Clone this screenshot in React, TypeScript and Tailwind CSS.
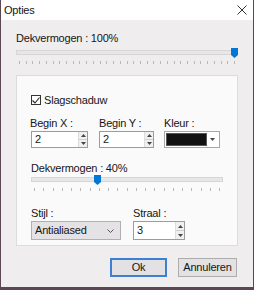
import React from 'react';

function Ticks({ count }: { count: number }) {
  return (
    <div className="flex justify-between px-[3px] h-[3px] mt-[3px]">
      {Array.from({ length: count }).map((_, i) => (
        <div key={i} className="w-px h-[3px] bg-[#b8b8b8]" />
      ))}
    </div>
  );
}

function Slider({ pct, ticks }: { pct: number; ticks: number }) {
  return (
    <div>
      <div className="relative h-[10px]">
        <div className="absolute left-0 right-0 top-[2px] h-[5px] bg-[#e7e7e7] border border-[#d6d6d6]" />
        <svg
          className="absolute top-0"
          style={{ left: `calc(${pct}% - ${pct / 100 * 7}px)` }}
          width="7"
          height="10"
          viewBox="0 0 7 10"
        >
          <path d="M0 0 H7 V7 L3.5 10 L0 7 Z" fill="#0078d7" />
        </svg>
      </div>
      <Ticks count={ticks} />
    </div>
  );
}

function Spinner() {
  return (
    <div className="flex flex-col w-[9px] h-full border-l border-[#dcdcdc]">
      <div className="flex-1 flex items-center justify-center bg-[#f0f0f0] border-b border-[#cfcfcf]">
        <svg width="5" height="3" viewBox="0 0 5 3"><path d="M0 3 L2.5 0 L5 3 Z" fill="#444" /></svg>
      </div>
      <div className="flex-1 flex items-center justify-center bg-[#f0f0f0]">
        <svg width="5" height="3" viewBox="0 0 5 3"><path d="M0 0 L2.5 3 L5 0 Z" fill="#444" /></svg>
      </div>
    </div>
  );
}

function NumField({ value, width }: { value: string; width: string }) {
  return (
    <div className={`${width} flex bg-white border border-[#9c9c9c]`}>
      <div className="flex-1 pl-[3px] flex items-center">{value}</div>
      <Spinner />
    </div>
  );
}

export default function App() {
  return (
    <div
      className="w-[254px] h-[290px] bg-[#5a4753] flex text-[11px] tracking-[-0.2px] text-[#151515]"
      style={{ fontFamily: '"Liberation Sans", Arial, sans-serif' }}
    >
      <div className="ml-[1px] mr-[4px] mb-[3px] flex-1 flex flex-col bg-[#f0edef]">
        <div className="h-[20px] bg-white flex items-center justify-between pl-[3px] pr-[6px]">
          <span className="leading-none">Opties</span>
          <svg width="10" height="10" viewBox="0 0 10 10">
            <path d="M0.5 0.5 L9.5 9.5 M9.5 0.5 L0.5 9.5" stroke="#333" strokeWidth="1" />
          </svg>
        </div>
        <div className="px-[15px] pt-[10px] flex flex-col">
          <div className="leading-[16px]">Dekvermogen : 100%</div>
          <div className="mt-[2px]">
            <Slider pct={100} ticks={33} />
          </div>
          <div className="mt-[11px] h-[171px] bg-[#fbfafb] border border-[#dcdcdc] px-[14px] pt-[18px] flex flex-col">
            <label className="flex items-center gap-[3px] leading-[12px]">
              <span className="w-[10px] h-[10px] border border-[#333] bg-white flex items-center justify-center">
                <svg width="8" height="7" viewBox="0 0 8 7">
                  <path d="M0.5 3.5 L3 6 L7.5 0.5" stroke="#222" strokeWidth="1.1" fill="none" />
                </svg>
              </span>
              Slagschaduw
            </label>
            <div className="mt-[9px] flex gap-[11px]">
              <div className="flex flex-col">
                <span className="leading-[16px] -ml-px">Begin X :</span>
                <NumField value="2" width="w-[57px] h-[17px]" />
              </div>
              <div className="flex flex-col">
                <span className="leading-[16px]">Begin Y :</span>
                <NumField value="2" width="w-[55px] h-[17px]" />
              </div>
              <div className="flex flex-col ml-[-1px]">
                <span className="leading-[16px]">Kleur :</span>
                <div className="w-[56px] h-[17px] flex items-stretch bg-white border border-[#a8a8a8] p-px">
                  <div className="flex-1 bg-[#111] border border-[#555]" />
                  <div className="w-[11px] flex items-center justify-center">
                    <svg width="5" height="3" viewBox="0 0 5 3"><path d="M0 0 L2.5 3 L5 0 Z" fill="#444" /></svg>
                  </div>
                </div>
              </div>
            </div>
            <div className="mt-[12px] leading-[16px]">Dekvermogen : 40%</div>
            <div className="mt-[-1px] w-[192px]">
              <Slider pct={34} ticks={21} />
            </div>
            <div className="mt-[14px] flex gap-[12px]">
              <div className="flex flex-col">
                <span className="leading-[16px]">Stijl :</span>
                <div className="w-[90px] h-[19px] bg-[#e4e2e4] border border-[#b0b0b0] flex items-center justify-between pl-[3px] pr-[6px]">
                  <span>Antialiased</span>
                  <svg width="7" height="4" viewBox="0 0 7 4">
                    <path d="M0.5 0.5 L3.5 3.5 L6.5 0.5" stroke="#555" fill="none" />
                  </svg>
                </div>
              </div>
              <div className="flex flex-col">
                <span className="leading-[16px]">Straal :</span>
                <NumField value="3" width="w-[52px] h-[19px]" />
              </div>
            </div>
          </div>
          <div className="mt-[12px] flex justify-end gap-[11px] pr-[1px]">
            <button className="w-[57px] h-[19px] bg-[#e3e1e3] border-2 border-[#3d7fd0] leading-none">Ok</button>
            <button className="w-[59px] h-[19px] bg-[#e3e1e3] border border-[#adadad] leading-none">Annuleren</button>
          </div>
        </div>
      </div>
    </div>
  );
}
